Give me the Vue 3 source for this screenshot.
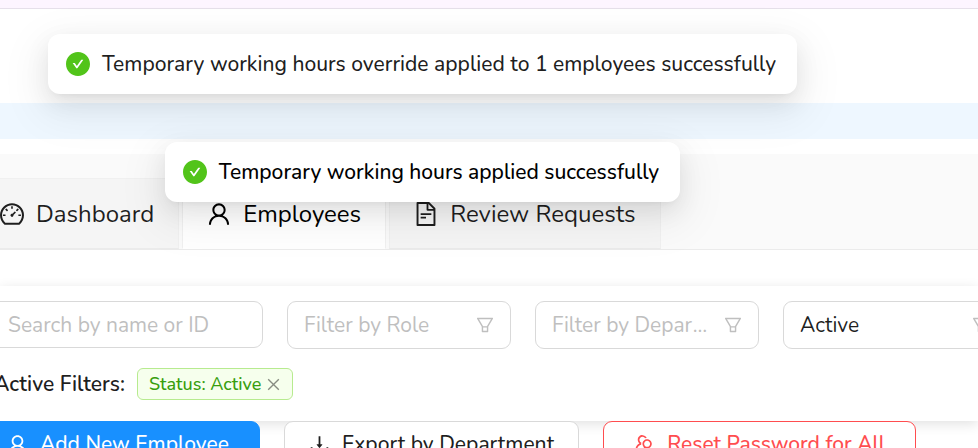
<script setup>
import { ref, h } from 'vue'

const paths = {
  check: 'M512 64C264.6 64 64 264.6 64 512s200.6 448 448 448 448-200.6 448-448S759.4 64 512 64zm193.5 301.7l-210.6 292a31.8 31.8 0 01-51.7 0L318.5 484.9c-3.8-5.3 0-12.7 6.5-12.7h46.9c10.2 0 19.9 4.9 25.9 13.3l71.2 98.8 157.2-218c6-8.3 15.6-13.3 25.9-13.3H699c6.5 0 10.3 7.4 6.5 12.7z',
  user: 'M858.5 763.6a374 374 0 00-80.6-119.5 375.63 375.63 0 00-119.5-80.6c-.4-.2-.8-.3-1.2-.5C719.5 518 760 444.7 760 362c0-137-111-248-248-248S264 225 264 362c0 82.7 40.5 156 102.8 201.1-.4.2-.8.3-1.2.5-44.8 18.9-85 46-119.5 80.6a375.63 375.63 0 00-80.6 119.5A371.7 371.7 0 00136 901.8a8 8 0 008 8.2h60c4.4 0 7.9-3.5 8-7.8 2-77.2 33-149.5 87.8-204.3 56.7-56.7 132-87.9 212.2-87.9s155.5 31.2 212.2 87.9C779 752.7 810 825 812 902.2c.1 4.4 3.6 7.8 8 7.8h60a8 8 0 008-8.2c-1-47.8-10.9-94.3-29.5-138.2zM512 534c-45.9 0-89.1-17.9-121.6-50.4S340 407.9 340 362c0-45.9 17.9-89.1 50.4-121.6S466.1 190 512 190s89.1 17.9 121.6 50.4S684 316.1 684 362c0 45.9-17.9 89.1-50.4 121.6S557.9 534 512 534z',
  dashboard: 'M924.8 385.6a446.7 446.7 0 00-96-142.4 446.7 446.7 0 00-142.4-96C631.1 123.8 572.5 112 512 112s-119.1 11.8-174.4 35.2a446.7 446.7 0 00-142.4 96 446.7 446.7 0 00-96 142.4C75.8 440.9 64 499.5 64 560c0 132.7 58.3 257.7 159.9 343.1l1.7 1.4c5.8 4.8 13.1 7.5 20.6 7.5h531.7c7.5 0 14.8-2.7 20.6-7.5l1.7-1.4C901.7 817.7 960 692.7 960 560c0-60.5-11.9-119.1-35.2-174.4zM761.4 836H262.6A371.12 371.12 0 01140 560c0-99.4 38.7-192.8 109-263 70.3-70.3 163.7-109 263-109 99.4 0 192.8 38.7 263 109 70.3 70.3 109 163.7 109 263 0 105.6-44.5 205.5-122.6 276zM623.5 421.5a8.03 8.03 0 00-11.3 0L527.7 506c-18.7-5-39.4-.2-54.1 14.5a55.95 55.95 0 000 79.2 55.95 55.95 0 0079.2 0 55.87 55.87 0 0014.5-54.1l84.5-84.5c3.1-3.1 3.1-8.2 0-11.3l-28.3-28.3zM490 320h44c4.4 0 8-3.6 8-8v-80c0-4.4-3.6-8-8-8h-44c-4.4 0-8 3.6-8 8v80c0 4.4 3.6 8 8 8zm260 218v44c0 4.4 3.6 8 8 8h80c4.4 0 8-3.6 8-8v-44c0-4.4-3.6-8-8-8h-80c-4.4 0-8 3.6-8 8zm12.7-197.2l-31.1-31.1a8.03 8.03 0 00-11.3 0l-56.6 56.6a8.03 8.03 0 000 11.3l31.1 31.1c3.1 3.1 8.2 3.1 11.3 0l56.6-56.6c3.1-3.1 3.1-8.2 0-11.3zm-458.6-31.1a8.03 8.03 0 00-11.3 0l-31.1 31.1a8.03 8.03 0 000 11.3l56.6 56.6c3.1 3.1 8.2 3.1 11.3 0l31.1-31.1c3.1-3.1 3.1-8.2 0-11.3l-56.6-56.6zM262 530h-80c-4.4 0-8 3.6-8 8v44c0 4.4 3.6 8 8 8h80c4.4 0 8-3.6 8-8v-44c0-4.4-3.6-8-8-8z',
  file: 'M854.6 288.6L639.4 73.4c-6-6-14.1-9.4-22.6-9.4H192c-17.7 0-32 14.3-32 32v832c0 17.7 14.3 32 32 32h640c17.7 0 32-14.3 32-32V311.3c0-8.5-3.4-16.7-9.4-22.7zM790.2 326H602V137.8L790.2 326zm1.8 562H232V136h302v216a42 42 0 0042 42h216v494zM504 618H320c-4.4 0-8 3.6-8 8v48c0 4.4 3.6 8 8 8h184c4.4 0 8-3.6 8-8v-48c0-4.4-3.6-8-8-8zM312 490v48c0 4.4 3.6 8 8 8h384c4.4 0 8-3.6 8-8v-48c0-4.4-3.6-8-8-8H320c-4.4 0-8 3.6-8 8z',
  filter: 'M880.1 154H143.9c-24.5 0-39.8 26.7-27.5 48L349 597.4V838c0 17.7 14.2 32 31.8 32h262.4c17.6 0 31.8-14.3 31.8-32V597.4L907.7 202c12.2-21.3-3.1-48-27.6-48zM603.4 798H420.6V642h182.9v156zm9.6-236.6l-9.5 16.6h-183l-9.5-16.6L212.7 226h598.6L613 561.4z',
  close: 'M800 166l58 58-288 288 288 288-58 58-288-288-288 288-58-58 288-288-288-288 58-58 288 288z',
  download: 'M505.7 661a8 8 0 0012.6 0l112-141.7c4.1-5.2.4-12.9-6.3-12.9h-74.1V168c0-4.4-3.6-8-8-8h-60c-4.4 0-8 3.6-8 8v338.3H400c-6.7 0-10.4 7.7-6.3 12.9l112 141.8zM878 626h-60c-4.4 0-8 3.6-8 8v154H214V634c0-4.4-3.6-8-8-8h-60c-4.4 0-8 3.6-8 8v198c0 17.7 14.3 32 32 32h684c17.7 0 32-14.3 32-32V634c0-4.4-3.6-8-8-8z',
  group: 'M373.5 510.4c-.9-8.7-1.4-17.5-1.4-26.4 0-15.9 1.5-31.4 4.3-46.5.7-3.6-1.2-7.3-4.5-8.8-13.6-6.1-26.1-14.5-36.9-25.1a127.54 127.54 0 01-38.7-95.4c.9-32.1 13.8-62.6 36.3-85.6 24.7-25.3 57.9-39.1 93.2-38.7 31.9.3 62.7 12.6 86 34.4 7.9 7.4 14.7 15.6 20.4 24.4 2 3.1 5.9 4.4 9.3 3.2 17.6-6.1 36.2-10.4 55.3-12.4 5.6-.6 8.8-6.6 6.3-11.6-32.5-64.3-98.9-108.7-175.7-109.9-110.9-1.7-203.3 89.2-203.3 199.9 0 62.8 28.9 118.8 74.2 155.5-31.8 14.7-61.1 35-86.5 60.4-54.8 54.7-85.8 126.9-87.8 204a8 8 0 008 8.2h56.1c4.3 0 7.9-3.4 8-7.7 1.9-58 25.4-112.3 66.7-153.5 29.4-29.4 65.4-49.8 104.7-59.7 3.9-1 6.5-4.7 6-8.7zM824 484c0-109.4-87.9-198.3-196.9-200C516.3 282.3 424 373.2 424 484c0 62.8 29 118.8 74.2 155.5a300.95 300.95 0 00-86.4 60.4C357 754.6 326 826.8 324 903.8a8 8 0 008 8.2h56c4.3 0 7.9-3.4 8-7.7 1.9-58 25.4-112.3 66.7-153.5C505.8 707.7 563 684 624 684c110.4 0 200-89.5 200-200zm-109.5 90.5C690.3 598.7 658.2 612 624 612s-66.3-13.3-90.5-37.5a127.26 127.26 0 01-37.5-91.8c.3-32.8 13.4-64.5 36.3-88 24-24.6 56.1-38.3 90.4-38.7 33.9-.3 66.8 12.9 91 36.6 24.8 24.3 38.4 56.8 38.4 91.4-.1 34.2-13.4 66.3-37.6 90.5z'
}

const Icon = (props) =>
  h('svg', { viewBox: '64 64 896 896', fill: 'currentColor', 'aria-hidden': 'true' }, [
    h('path', { d: paths[props.name] })
  ])
Icon.props = ['name']

const messages = ref([
  { text: 'Temporary working hours override applied to 1 employees successfully', strong: false },
  { text: 'Temporary working hours applied successfully', strong: true }
])

const activeTab = ref('employees')
const tabs = [
  { key: 'dashboard', label: 'Dashboard', icon: 'dashboard' },
  { key: 'employees', label: 'Employees', icon: 'user' },
  { key: 'requests', label: 'Review Requests', icon: 'file' }
]

const search = ref('')
const filters = ref([
  { id: 'role', label: 'Role', placeholder: 'Filter by Role', value: '', options: ['Admin', 'Manager'] },
  { id: 'department', label: 'Department', placeholder: 'Filter by Department', value: '', options: ['HR', 'Sales'] },
  { id: 'status', label: 'Status', placeholder: 'Filter by Status', value: 'Active', options: ['Active', 'Inactive'] }
])
</script>

<template>
  <div class="page">
    <header class="topbar"></header>
    <div class="band"></div>

    <nav class="tabs" role="tablist">
      <button
        v-for="tab in tabs"
        :key="tab.key"
        type="button"
        role="tab"
        class="tab"
        :class="{ active: tab.key === activeTab }"
        :aria-selected="tab.key === activeTab"
        @click="activeTab = tab.key"
      >
        <Icon :name="tab.icon" class="tab-icon" />
        <span>{{ tab.label }}</span>
      </button>
    </nav>

    <main>
      <section class="card">
        <div class="fields">
          <input v-model="search" class="control search" type="text" placeholder="Search by name or ID" aria-label="Search by name or ID" />
          <div v-for="f in filters" :key="f.id" class="select-wrap">
            <select :id="f.id" v-model="f.value" class="control select" :class="{ empty: !f.value }" :aria-label="f.label">
              <option value="">{{ f.placeholder }}</option>
              <option v-for="o in f.options" :key="o" :value="o">{{ o }}</option>
            </select>
            <Icon name="filter" class="select-icon" />
          </div>
        </div>
        <div class="active-filters">
          <strong class="caption">Active Filters:</strong>
          <span class="tag">
            <span>Status: Active</span>
            <button type="button" class="tag-close" aria-label="Remove filter"><Icon name="close" class="close-icon" /></button>
          </span>
        </div>
      </section>

      <div class="actions">
        <button type="button" class="btn primary"><Icon name="user" class="btn-icon" /><span>Add New Employee</span></button>
        <button type="button" class="btn compact"><Icon name="download" class="btn-icon" /><span>Export by Department</span></button>
        <button type="button" class="btn danger"><Icon name="group" class="btn-icon" /><span>Reset Password for All</span></button>
      </div>
    </main>

    <div class="messages" role="status">
      <div v-for="m in messages" :key="m.text" class="message" :class="{ strong: m.strong }">
        <Icon name="check" class="message-icon" />
        <span>{{ m.text }}</span>
      </div>
    </div>
  </div>
</template>

<style>
body {
  margin: 0;
  background: #fff;
}
</style>

<style scoped>
.page {
  position: relative;
  height: 100vh;
  overflow: hidden;
  font-family: Nunito, "Noto Sans", sans-serif;
  font-size: 21px;
  line-height: 32px;
  color: rgba(0, 0, 0, 0.88);
  background: #fff;
}
.page * {
  box-sizing: border-box;
}
svg {
  display: block;
  flex: none;
}
button,
input,
select {
  font: inherit;
  color: inherit;
  margin: 0;
}
.topbar {
  height: 9px;
  background: #fdf5ff;
  border-bottom: 1px solid #e6e0ea;
}
.band {
  height: 36px;
  margin: 94px 0 15px;
  background: #eef7ff;
}
.tabs {
  display: flex;
  gap: 3px;
  padding: 24px 0 0;
  margin-left: -25px;
  background: #fafafa;
  border-bottom: 1px solid #ebebeb;
}
.tab {
  display: flex;
  align-items: center;
  gap: 12px;
  height: 71px;
  padding: 0 24px;
  border: 1px solid #f0f0f0;
  border-bottom-color: #ebebeb;
  background: #f5f5f5;
  font-size: 24px;
  white-space: nowrap;
}
.tab.active {
  background: #fff;
  border-bottom-color: #fff;
  color: #000;
}
.tab-icon {
  width: 24px;
  height: 24px;
}
.card {
  margin-top: 36px;
  padding: 15px 0 21px;
  background: #fff;
  box-shadow: 0 3px 12px rgba(0, 0, 0, 0.12);
}
.fields {
  display: grid;
  grid-template-columns: 272fr 224fr 224fr 224fr;
  gap: 24px;
  margin: 0 -29px 0 -9px;
}
.control {
  width: 100%;
  min-width: 0;
  height: 48px;
  border: 1px solid #d9d9d9;
  border-radius: 9px;
  background: #fff;
  outline: none;
}
.search {
  height: 47px;
  padding: 0 16px;
}
.search::placeholder {
  color: #bfbfbf;
  opacity: 1;
}
.select-wrap {
  position: relative;
}
.select {
  display: block;
  appearance: none;
  padding: 0 44px 0 16px;
  text-overflow: ellipsis;
  white-space: nowrap;
  overflow: hidden;
}
.select.empty {
  color: #bfbfbf;
}
.select-icon {
  position: absolute;
  top: 15px;
  right: 17px;
  width: 18px;
  height: 18px;
  color: #bfbfbf;
  pointer-events: none;
}
.active-filters {
  display: flex;
  align-items: center;
  gap: 12px;
  margin: 19px 0 0 -6px;
}
.caption {
  font-weight: 600;
}
.tag {
  display: flex;
  align-items: center;
  gap: 5px;
  height: 32px;
  padding: 0 11px;
  border: 1px solid #b7eb8f;
  border-radius: 6px;
  background: #f6ffed;
  color: #389e0d;
  font-size: 18px;
  font-weight: 500;
}
.tag-close {
  padding: 0;
  border: 0;
  background: none;
  color: rgba(0, 0, 0, 0.45);
}
.close-icon {
  width: 15px;
  height: 15px;
}
.actions {
  position: relative;
  display: flex;
  gap: 24px;
  margin-left: -24px;
}
.btn {
  display: flex;
  align-items: center;
  gap: 12px;
  height: 48px;
  padding: 0 30px 2px;
  border: 1px solid #d9d9d9;
  border-radius: 9px;
  background: #fff;
  font-weight: 500;
  white-space: nowrap;
}
.btn.compact {
  padding: 0 24px 2px;
}
.btn.primary {
  border-color: #1890ff;
  background: #1890ff;
  color: #fff;
}
.btn.danger {
  border-color: #ff4d4f;
  color: #ff4d4f;
}
.btn-icon {
  width: 21px;
  height: 21px;
}
.messages {
  position: absolute;
  top: 34px;
  left: 0;
  right: 133px;
  display: flex;
  flex-direction: column;
  align-items: center;
  gap: 48px;
}
.message {
  display: flex;
  align-items: center;
  gap: 12px;
  padding: 14px 21px 14px 18px;
  border-radius: 12px;
  background: #fff;
  font-weight: 500;
  white-space: nowrap;
  box-shadow:
    0 9px 24px rgba(0, 0, 0, 0.08),
    0 4px 9px -6px rgba(0, 0, 0, 0.12),
    0 14px 42px 12px rgba(0, 0, 0, 0.05);
}
.message.strong {
  color: #000;
}
.message-icon {
  width: 24px;
  height: 24px;
  color: #52c41a;
}
</style>
